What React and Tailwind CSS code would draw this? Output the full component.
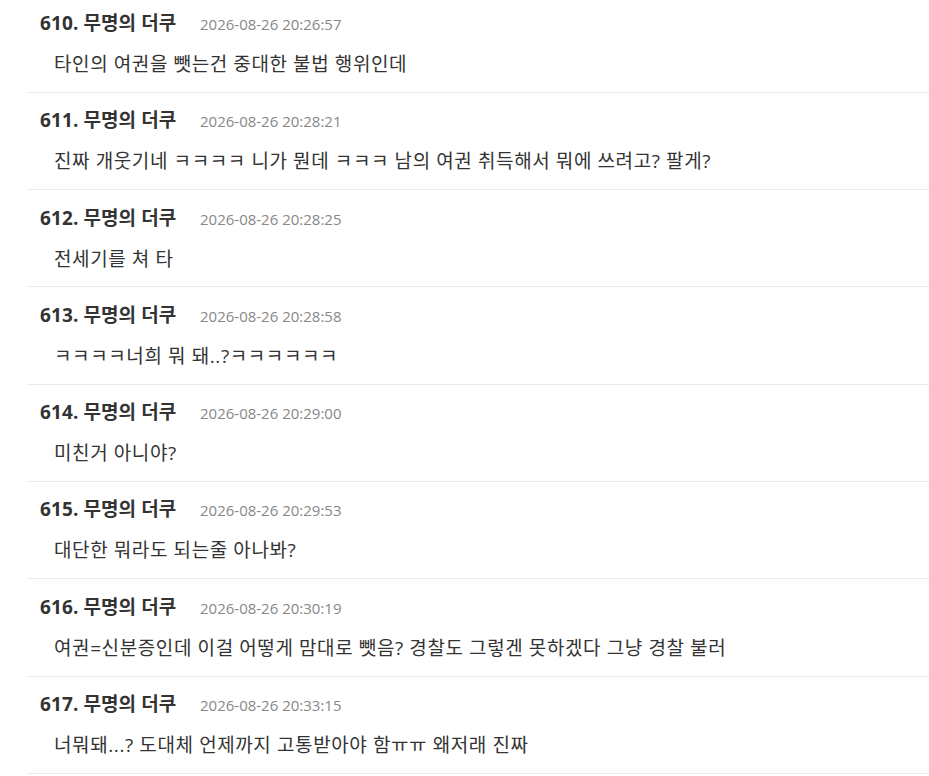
import React from 'react';

const posts = [
  { no: 610, date: '2026-08-26 20:26:57', text: '타인의 여권을 뺏는건 중대한 불법 행위인데' },
  { no: 611, date: '2026-08-26 20:28:21', text: '진짜 개웃기네 ㅋㅋㅋㅋ 니가 뭔데 ㅋㅋㅋ 남의 여권 취득해서 뭐에 쓰려고? 팔게?' },
  { no: 612, date: '2026-08-26 20:28:25', text: '전세기를 쳐 타' },
  { no: 613, date: '2026-08-26 20:28:58', text: 'ㅋㅋㅋㅋ너희 뭐 돼..?ㅋㅋㅋㅋㅋㅋ' },
  { no: 614, date: '2026-08-26 20:29:00', text: '미친거 아니야?' },
  { no: 615, date: '2026-08-26 20:29:53', text: '대단한 뭐라도 되는줄 아나봐?' },
  { no: 616, date: '2026-08-26 20:30:19', text: '여권=신분증인데 이걸 어떻게 맘대로 뺏음? 경찰도 그렇겐 못하겠다 그냥 경찰 불러' },
  { no: 617, date: '2026-08-26 20:33:15', text: '너뭐돼...? 도대체 언제까지 고통받아야 함ㅠㅠ 왜저래 진짜' },
];

export default function App() {
  return (
    <div className="bg-white min-h-screen overflow-hidden font-['Open_Sans','Noto_Sans_CJK_KR',sans-serif] text-[#333]">
      <ul className="ml-[27px] -mt-[4.5px]">
        {posts.map((p) => (
          <li key={p.no} className="border-b border-[#ebebeb] h-[97.3px] pl-[13px] pt-[13.5px]">
            <div className="flex items-baseline">
              <span className="text-[19px] font-bold text-[#333] w-[160px] leading-[28px] tracking-[0.1px]">
                {p.no}. 무명의 더쿠
              </span>
              <span className="text-[15px] text-[#888]">{p.date}</span>
            </div>
            <p className="mt-[13px] pl-[14px] text-[19px] text-[#333] leading-[28px] tracking-[0.6px]">{p.text}</p>
          </li>
        ))}
      </ul>
    </div>
  );
}
